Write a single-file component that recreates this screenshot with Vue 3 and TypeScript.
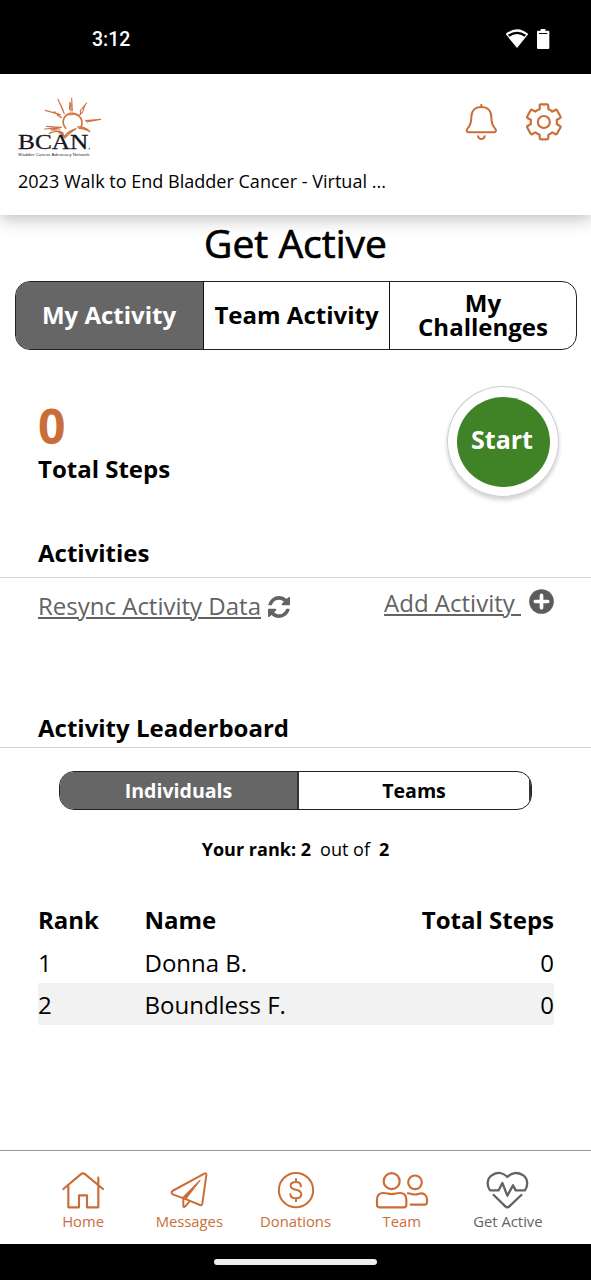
<script setup lang="ts">
import { ref } from 'vue'

interface Row { rank: number; name: string; steps: number }

const tabs: string[] = ['My Activity', 'Team Activity', 'My Challenges']
const activeTab = ref(0)
const groups: string[] = ['Individuals', 'Teams']
const activeGroup = ref(0)
const rows: Row[] = [
  { rank: 1, name: 'Donna B.', steps: 0 },
  { rank: 2, name: 'Boundless F.', steps: 0 },
]
</script>

<template>
  <div class="screen">
    <div class="status">
      <span class="time">3:12</span>
      <div class="status-icons">
        <svg class="wifi" viewBox="195 54 72 63"><path fill="#fff" d="M197 72Q231 43 265 72L231 114Z" /><path d="M206 77Q231 60 256 77" fill="none" stroke="#000" stroke-width="7" /></svg>
        <svg class="battery" viewBox="288 54 42 66"><path fill="#fff" d="M302 57h14v5h9q3 0 3 3v49q0 3-3 3h-31q-3 0-3-3V65q0-3 3-3h8z" /><path d="M297 70.500h25" stroke="#000" stroke-width="3" /></svg>
      </div>
    </div>

    <header class="header">
      <div class="brand-row">
        <svg class="logo" viewBox="54 45 252 189">
          <g fill="none" stroke="#cf7440" stroke-linecap="round">
            <path d="M197 145C183 127 190 105 211 100C237 97 251 119 244 139" stroke-width="5" />
            <path d="M208 105Q224 99 239 109" stroke-width="3" />
            <path d="M148 160Q169 149 188 158L192 170Q207 151 229 146Q214 154 195 173Q188 161 177 158" stroke-width="4" />
            <path d="M233 141Q256 140 270 155Q252 145 237 145" stroke-width="4" />
            <path d="M174 58L188 91L193 101M179 68L190 92M136 91L181 104M163 95L185 114L171 104M210 66L208 88M215 54L217 92M212 70L213 93M260 69L241 92L242 103M256 73L247 98L239 104M257 122L302 118M259 126L293 120M139 139L181 142M134 147L185 142L151 150H180" stroke-width="3.400" />
          </g>
          <text x="54" y="208" textLength="211" lengthAdjust="spacingAndGlyphs" class="logo-name">BCAN</text>
          <circle cx="268" cy="206" r="2" fill="#333" />
          <text x="55" y="227" textLength="214" lengthAdjust="spacingAndGlyphs" class="logo-sub">Bladder Cancer Advocacy Network</text>
        </svg>
        <div class="header-icons">
          <svg class="bell" viewBox="75 279 96 114" fill="none" stroke="#c96e38" stroke-width="6" stroke-linecap="round" stroke-linejoin="round"><path d="M124 284v6M124 291C105 291 94 303 94 322C94 340 91 347 83 355C78 361 80 367 87 367H161C168 367 170 361 165 355C157 347 154 340 154 322C154 303 143 291 124 291ZM114 379Q116 387 124 387Q132 387 134 379" /></svg>
          <svg class="gear" viewBox="256 279 111 114" fill="none" stroke="#c96e38" stroke-width="6.500" stroke-linejoin="round"><path d="M300 284Q301 283 303 283H322Q326 283 326 287V298Q333 300 338 305L347 300Q350 298 352 301L362 319Q364 322 361 324L351 330Q353 336 351 342L361 348Q364 350 362 353L352 371Q350 374 347 372L338 367Q333 372 326 374V384Q326 388 322 388H304Q300 388 300 384V374Q293 372 287 367L278 372Q275 374 273 371L263 353Q261 350 264 348L274 342Q272 336 274 330L264 324Q261 322 263 319L273 301Q275 298 278 300L287 305Q293 300 300 298Z" /><circle cx="312.500" cy="336" r="18" /></svg>
        </div>
      </div>
      <p class="event">2023 Walk to End Bladder Cancer - Virtual ...</p>
    </header>

    <main class="content">
      <h1 class="title">Get Active</h1>
      <div class="tabs">
        <button v-for="(t, i) in tabs" :key="t" class="tab" :class="{ on: i === activeTab }" @click="activeTab = i"><span>{{ t }}</span></button>
      </div>

      <section class="summary">
        <div>
          <div class="count">0</div>
          <div class="count-label">Total Steps</div>
        </div>
        <button class="start"><span>Start</span></button>
      </section>

      <h2 class="section-title activities">Activities</h2>
      <div class="links">
        <div class="link resync"><a>Resync Activity Data</a>
          <svg viewBox="0 0 1536 1536"><path fill="#626362" d="M1511 928q0 5-1 7-64 268-268 434.500t-478 166.500q-146 0-282.500-55t-243.500-157l-129 129q-19 19-45 19t-45-19-19-45v-448q0-26 19-45t45-19h448q26 0 45 19t19 45-19 45l-137 137q71 66 161 102t187 36q134 0 250-65t186-179q11-17 53-117 8-23 30-23h192q13 0 22.500 9.500t9.500 22.500zm25-800v448q0 26-19 45t-45 19h-448q-26 0-45-19t-19-45 19-45l138-138q-148-137-349-137-134 0-250 65t-186 179q-11 17-53 117-8 23-30 23h-199q-13 0-22.500-9.500t-9.500-22.500v-7q65-268 270-434.500t480-166.500q146 0 284 55.500t245 156.500l130-129q19-19 45-19t45 19 19 45z" /></svg>
        </div>
        <div class="link add"><a>Add Activity&nbsp;</a>
          <svg viewBox="0 0 75 75"><circle cx="37.500" cy="37.500" r="37" fill="#5b5c5c" /><path d="M37.500 19v37M19 37.500h37" stroke="#fff" stroke-width="11" stroke-linecap="round" /></svg>
        </div>
      </div>

      <h2 class="section-title board">Activity Leaderboard</h2>
      <div class="segments">
        <button v-for="(g, i) in groups" :key="g" class="segment" :class="{ on: i === activeGroup }" @click="activeGroup = i">{{ g }}</button>
      </div>
      <p class="rank"><b>Your rank: 2</b><span>out of</span><b>2</b></p>

      <div class="table">
        <div class="row head"><span>Rank</span><span>Name</span><span class="num">Total Steps</span></div>
        <div v-for="r in rows" :key="r.rank" class="row"><span>{{ r.rank }}</span><span>{{ r.name }}</span><span class="num">{{ r.steps }}</span></div>
      </div>
    </main>

    <nav class="nav">
      <a class="item">
        <svg class="w42" viewBox="66 78 126 114" stroke-width="6.500"><path d="M70 132L122 88Q129 82 136 88L189 132M85 122V187H117V151H141V187H175V98" /></svg>
        <span>Home</span>
      </a>
      <a class="item">
        <svg class="w38" viewBox="392 78 114 114" stroke-width="6"><path d="M399 138L495 86Q502 83 501 91L489 176Q488 182 482 180L443 164L400 148Q394 143 399 138Z" /><path d="M431 157L482 106L440 161Z" class="fill" stroke-width="3.500" /><path d="M432 158V182Q432 188 437 185L450 170" /></svg>
        <span>Messages</span>
      </a>
      <a class="item">
        <svg class="w38" viewBox="111 78 114 114" stroke-width="6"><circle cx="168" cy="135.500" r="51.500" /><path d="M183 124C182 113 176 111 168 111C158 111 152 115 152 122C152 140 184 128 184 148C184 156 177 160 168 160C158 160 152 156 151 148M168 102v9M168 160v9" /></svg>
        <span>Donations</span>
      </a>
      <a class="item">
        <svg class="w54" viewBox="405 78 162 114" stroke-width="6.500"><circle cx="455" cy="108.500" r="24" /><circle cx="525" cy="112" r="20.500" /><path d="M430 144C442 144 443 147 455 147C467 147 468 144 480 144C493 144 499 152 499 164V179Q499 187 491 187H419Q411 187 411 179V164C411 152 418 144 430 144ZM504 145Q508 144 512 146Q525 151 537 146C551 142 561 151 561 163V172Q561 179 554 179H512" /></svg>
        <span>Team</span>
      </a>
      <a class="item current">
        <svg class="w43" viewBox="201 78 129 114" stroke-width="7"><path d="M213 136C202 121 204 99 220 90C236 80 253 83 265 96C277 83 295 80 311 90C327 99 328 121 318 136H290L282 121L265 152L250 114L239 136ZM224 150L259 184Q265 190 271 184L307 150" /></svg>
        <span>Get Active</span>
      </a>
    </nav>
    <div class="gesture"><div class="pill"></div></div>
  </div>
</template>

<style>
body { margin: 0; background: #fff; }
</style>

<style scoped>
.screen { width: 591px; height: 1280px; display: flex; flex-direction: column; font-family: "Open Sans", "Noto Sans", sans-serif; color: #000; background: #fff; overflow: hidden; }
.screen * { box-sizing: border-box; }
svg { display: block; flex: none; }
button { border: 0; padding: 0; font: inherit; background: none; color: inherit; }
p, h1, h2 { margin: 0; }
.status { flex: none; height: 74px; background: #000; color: #fff; display: flex; justify-content: space-between; padding: 28px 41px 0 92px; }
.time { font: 500 19.500px/24px Roboto, sans-serif; }
.status-icons { display: flex; gap: 7px; }
.wifi { width: 24px; height: 21px; }
.battery { width: 14px; height: 22px; }
.header { flex: none; height: 141px; padding: 21px 28.700px 0 18px; background: #fff; box-shadow: 0 4px 16px rgba(0, 0, 0, .26); position: relative; z-index: 1; }
.brand-row { display: flex; justify-content: space-between; height: 63px; }
.logo { width: 84px; height: 63px; overflow: visible; }
.logo-name { font: 61px "Liberation Serif", serif; fill: #15161d; stroke: #15161d; stroke-width: .8px; }
.logo-sub { font: 13px "Liberation Sans", sans-serif; fill: #333; }
.header-icons { display: flex; gap: 28.300px; padding-top: 8px; }
.bell { width: 32px; height: 38px; }
.gear { width: 37px; height: 38px; }
.event { margin-top: 11px; font-size: 18.050px; line-height: 24px; white-space: nowrap; }
.content { flex: 1; min-height: 0; }
.title { height: 66px; font-weight: 400; font-size: 39px; line-height: 56px; text-align: center; -webkit-text-stroke: .7px #000; }
.tabs { margin: 0 14px 0 15px; height: 69px; border: 1px solid #222; border-radius: 15px; display: flex; overflow: hidden; }
.tab { flex: 1; font-weight: 700; font-size: 24px; line-height: 24px; display: flex; align-items: center; justify-content: center; text-align: center; border-right: 1px solid #111; white-space: nowrap; padding-bottom: 2px; }
.tab:first-child { flex: 0 0 188px; padding-right: 1px; }
.tab:nth-child(2) { flex: 0 0 186px; }
.tab:last-child { border-right: 0; white-space: normal; }
.tab:last-child span { width: 140px; }
.on { background: #666; color: #fff; }
.summary { height: 183px; padding: 36px 32px 0 38px; display: flex; justify-content: space-between; }
.count { margin-top: 14px; font-size: 48px; font-weight: 700; line-height: 52px; color: #c96e38; }
.count-label { font-size: 24px; font-weight: 700; line-height: 33px; }
.start { width: 112px; height: 111px; border-radius: 50%; border: 1px solid #cacad3; display: flex; align-items: center; justify-content: center; box-shadow: 0 3px 4px rgba(0, 0, 0, .18); color: #fff; font-size: 25px; font-weight: 700; }
.start span { width: 93px; height: 90px; border-radius: 50%; background: #408326; line-height: 85px; padding-right: 2px; }
.section-title { font-size: 24px; font-weight: 700; line-height: 32px; padding-left: 38px; border-bottom: 1px solid #d2d2d2; }
.activities { height: 45px; padding-top: 4px; }
.links { height: 128px; padding: 0 37px 0 38px; display: flex; justify-content: space-between; color: #626362; font-size: 24px; line-height: 32px; }
.link { display: flex; align-items: flex-start; }
.link a { text-decoration: underline; text-decoration-thickness: 2px; text-underline-offset: 2px; white-space: nowrap; }
.resync { padding-top: 12px; }
.resync svg { width: 22px; height: 22px; margin: 6px 0 0 7px; }
.add { padding-top: 9px; }
.add svg { width: 25px; height: 25px; margin: 2px 0 0 8px; }
.board { height: 42px; padding-top: 6px; }
.segments { margin: 23px 59px 0; height: 39px; border: 1px solid #222; border-radius: 15px; display: flex; overflow: hidden; }
.segment { flex: 1; font-size: 19.600px; font-weight: 700; border-right: 2px solid #333; }
.segment:first-child { flex: 0 0 239px; }
.rank { margin-top: 27px; height: 25px; line-height: 24px; font-size: 18.050px; display: flex; justify-content: center; gap: 9px; }
.table { margin: 37px 37px 0 38px; font-size: 24px; }
.row { display: grid; grid-template-columns: 106.500px 1fr 1fr; height: 42px; line-height: 43px; }
.head { font-weight: 700; line-height: 41px; }
.row:last-child { background: #f2f2f2; }
.num { text-align: right; }
.nav { flex: none; height: 94px; border-top: 1px solid #999; padding: 20px 30px 0; display: flex; background: #fff; }
.item { flex: 1; display: flex; flex-direction: column; align-items: center; color: #c96e38; font-size: 14.800px; line-height: 20px; }
.item svg { height: 38px; fill: none; stroke: currentColor; stroke-linecap: round; stroke-linejoin: round; }
.item .fill { fill: currentColor; }
.item span { margin-top: 2px; white-space: nowrap; }
.current { color: #626362; }
.w38 { width: 38px; }
.w42 { width: 42px; }
.w43 { width: 43px; }
.w54 { width: 54px; }
.gesture { flex: none; height: 36px; background: #000; display: flex; justify-content: center; padding-top: 15px; }
.pill { width: 163px; height: 6px; border-radius: 3px; background: #eee; }
</style>
